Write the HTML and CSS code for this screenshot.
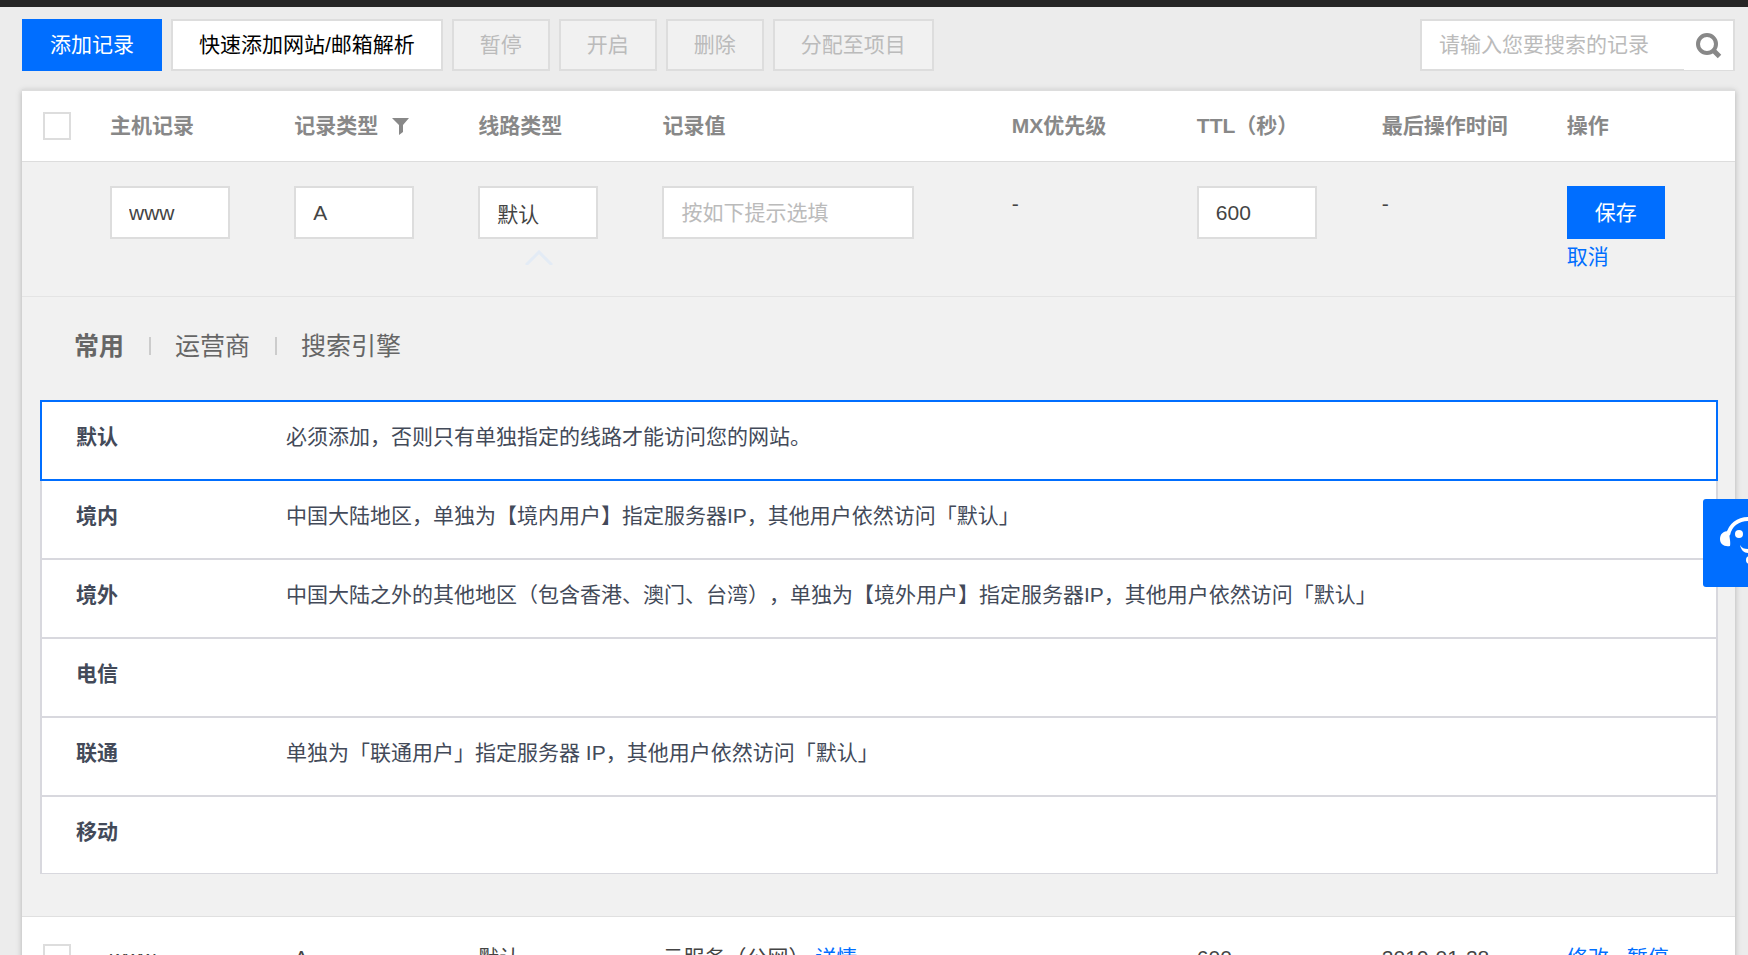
FILE: index.html
```html
<!DOCTYPE html>
<html lang="zh-CN">
<head>
<meta charset="utf-8">
<meta name="viewport" content="width=device-width, initial-scale=1">
<title>记录管理</title>
<link rel="stylesheet" href="styles.css">
</head>
<body>
<div class="topbar"></div>
<main class="page">
  <div class="toolbar">
    <button class="btn btn-primary" type="button">添加记录</button>
    <button class="btn" type="button">快速添加网站/邮箱解析</button>
    <button class="btn" type="button" disabled>暂停</button>
    <button class="btn" type="button" disabled>开启</button>
    <button class="btn" type="button" disabled>删除</button>
    <button class="btn" type="button" disabled>分配至项目</button>
    <form class="search">
      <input class="search-input" type="text" aria-label="搜索记录" placeholder="请输入您要搜索的记录">
      <button class="search-btn" type="button" aria-label="搜索">
        <svg width="26" height="26" viewBox="0 0 26 26" fill="none" stroke="#888" aria-hidden="true"><circle cx="11" cy="11" r="9" stroke-width="4"/><path d="M17 17l6.500 6.500" stroke-width="5"/></svg>
      </button>
    </form>
  </div>

  <table class="records">
    <colgroup>
      <col class="col-check"><col class="col-std"><col class="col-std"><col class="col-std"><col class="col-value"><col class="col-meta"><col class="col-meta"><col class="col-meta"><col>
    </colgroup>
    <thead>
      <tr>
        <th class="check-cell"><input class="check" type="checkbox" aria-label="全选"></th>
        <th>主机记录</th>
        <th><span class="filter">记录类型<svg width="17" height="17" viewBox="0 0 17 17" fill="#888" aria-hidden="true"><path d="M0 0h17l-6 7v7l-4 3V7z"/></svg></span></th>
        <th>线路类型</th>
        <th>记录值</th>
        <th>MX优先级</th>
        <th>TTL（秒）</th>
        <th>最后操作时间</th>
        <th>操作</th>
      </tr>
    </thead>
    <tbody>
      <tr class="edit-row">
        <td></td>
        <td><input class="field" type="text" aria-label="主机记录" value="www"></td>
        <td><input class="field" type="text" aria-label="记录类型" value="A"></td>
        <td class="line-cell"><input class="field" type="text" aria-label="线路类型" value="默认"><svg class="caret" width="28" height="15" viewBox="0 0 28 15" fill="none" stroke="#e3ebf5" stroke-width="3" aria-hidden="true"><path d="M1 15L14 2l13 13"/></svg></td>
        <td><input class="field field-wide" type="text" aria-label="记录值" placeholder="按如下提示选填"></td>
        <td>-</td>
        <td><input class="field" type="text" aria-label="TTL（秒）" value="600"></td>
        <td>-</td>
        <td><button class="btn btn-primary btn-save" type="button">保存</button><a class="link cancel" href="#">取消</a></td>
      </tr>
      <tr class="panel-row">
        <td colspan="9">
          <nav class="tabs">
            <button class="tab tab-active" type="button">常用</button>
            <button class="tab" type="button">运营商</button>
            <button class="tab" type="button">搜索引擎</button>
          </nav>
          <ul class="lines">
            <li class="line line-active"><strong class="line-name">默认</strong><span>必须添加，否则只有单独指定的线路才能访问您的网站。</span></li>
            <li class="line"><strong class="line-name">境内</strong><span>中国大陆地区，单独为【境内用户】指定服务器IP，其他用户依然访问「默认」</span></li>
            <li class="line"><strong class="line-name">境外</strong><span>中国大陆之外的其他地区（包含香港、澳门、台湾），单独为【境外用户】指定服务器IP，其他用户依然访问「默认」</span></li>
            <li class="line"><strong class="line-name">电信</strong></li>
            <li class="line"><strong class="line-name">联通</strong><span>单独为「联通用户」指定服务器 IP，其他用户依然访问「默认」</span></li>
            <li class="line"><strong class="line-name">移动</strong></li>
          </ul>
        </td>
      </tr>
      <tr class="data-row">
        <td class="check-cell"><input class="check" type="checkbox" aria-label="选择 www"></td>
        <td>www</td>
        <td>A</td>
        <td>默认</td>
        <td>云服务（公网） <a class="link" href="#">详情</a></td>
        <td></td>
        <td>600</td>
        <td>2019-01-28</td>
        <td><span class="actions"><a class="link" href="#">修改</a><a class="link" href="#">暂停</a></span></td>
      </tr>
    </tbody>
  </table>
</main>
<button class="support" type="button" aria-label="在线客服">
  <svg width="88" height="88" viewBox="0 0 88 88" fill="none" stroke="#fff" aria-hidden="true">
    <path d="M25 36C27 26 35 20 45 20s18 6 20 16" stroke-width="4"/>
    <path d="M26 32c-6 0-9 3-9 8s4 8 10 7c1-4-1-10-1-15zM64 32c6 0 9 3 9 8s-4 8-10 7c-1-4 1-10 1-15z" fill="#fff" stroke="none"/>
    <circle cx="36" cy="35" r="4" fill="#fff" stroke="none"/><circle cx="54" cy="35" r="4" fill="#fff" stroke="none"/>
    <path d="M37 46c2 3 4 4 8 4s6-1 8-4c-1 5-4 8-8 8s-7-3-8-8z" fill="#fff" stroke="none"/>
    <circle cx="47" cy="61" r="4" fill="#fff" stroke="none"/><path d="M48 61c9 0 14-6 17-15" stroke-width="3"/>
  </svg>
</button>
</body>
</html>
```
FILE: styles.css
```css
* {
  box-sizing: border-box;
}

html {
  scrollbar-width: none;
}

body {
  margin: 0;
  background: #ececec;
  color: #444;
  font: 21px/36px "Liberation Sans", "Noto Sans CJK SC", sans-serif;
  text-spacing-trim: space-all;
}

button,
input {
  font: inherit;
}

.topbar {
  height: 7px;
  background: #262626;
}

.page {
  padding: 12px 13px 0 22px;
}

.toolbar {
  display: flex;
  gap: 9px;
  margin-bottom: 18px;
}

.btn {
  height: 52px;
  padding: 0 26px;
  border: 2px solid #ddd;
  background: #fff;
  color: #000;
  line-height: 48px;
  white-space: nowrap;
}

.btn:disabled {
  background: #f1f1f1;
  color: #bbb;
}

.btn-primary {
  border-color: #006eff;
  background: #006eff;
  color: #fff;
}

.search {
  display: flex;
  width: 315px;
  height: 52px;
  margin-left: auto;
  border: 2px solid #ddd;
  background: #fff;
}

.search-input {
  flex: 1;
  min-width: 0;
  padding: 0 17px;
  border: 0;
  background: none;
  color: #444;
}

.search-input::placeholder,
.field::placeholder {
  color: #bbb;
  opacity: 1;
}

.search-btn {
  display: flex;
  align-items: center;
  justify-content: center;
  width: 49px;
  margin-bottom: -1px;
  padding: 0;
  border: 0;
  background: #fff;
}

.records {
  width: 100%;
  border-top: 2px solid #ddd;
  border-spacing: 0;
  table-layout: fixed;
  background: #fff;
  box-shadow: 0 2px 6px rgba(0, 0, 0, 0.25);
}

.col-check {
  width: 88px;
}

.col-std {
  width: 10.75%;
}

.col-value {
  width: 20.4%;
}

.col-meta {
  width: 10.8%;
}

th,
td {
  padding: 0;
  text-align: left;
  vertical-align: top;
  white-space: nowrap;
}

th {
  height: 71px;
  border-bottom: 1px solid #ddd;
  color: #888;
  vertical-align: middle;
}

.check-cell {
  padding-left: 21px;
}

.check {
  display: block;
  width: 28px;
  height: 28px;
  margin: 0;
  border: 2px solid #ddd;
  appearance: none;
  background: #fff;
}

.filter {
  display: flex;
  align-items: center;
  gap: 14px;
}

.edit-row td {
  padding: 24px 0 21px;
  border-bottom: 1px solid #e4e4e4;
  background: #f1f1f1;
}

.field {
  display: block;
  width: 65%;
  height: 53px;
  padding: 0 17px;
  border: 2px solid #ddd;
  background: #fff;
  color: #444;
}

.field-wide {
  width: 72%;
}

.line-cell {
  position: relative;
}

.caret {
  position: absolute;
  top: 88px;
  left: 47px;
}

.btn-save {
  display: block;
  height: 53px;
}

.link {
  color: #006eff;
  text-decoration: none;
}

.cancel {
  display: block;
}

.panel-row td {
  padding: 31px 17px 42px 18px;
  border-bottom: 1px solid #e0e0e0;
  background: #f1f1f1;
  white-space: normal;
}

.tabs {
  display: flex;
  align-items: center;
  margin: 0 34px 36px;
}

.tab {
  display: flex;
  align-items: center;
  padding: 0;
  border: 0;
  background: none;
  color: #666;
  font-size: 25px;
  line-height: 36px;
}

.tab + .tab::before {
  width: 2px;
  height: 18px;
  margin: 0 24px 0 25px;
  background: #ccc;
  content: "";
}

.tab-active {
  font-weight: bold;
}

.lines {
  margin: 0;
  padding: 0;
  list-style: none;
}

.line {
  display: flex;
  min-height: 79px;
  padding: 17px 34px 20px;
  border: 2px solid #d8d8de;
  border-top: 0;
  background: #fff;
  color: #434a59;
}

.line:last-child {
  min-height: 77px;
  border-bottom-width: 1px;
}

.line-active {
  min-height: 81px;
  border: 2px solid #006eff;
}

.line-name {
  flex: none;
  width: 210px;
}

.data-row td {
  height: 82px;
  vertical-align: middle;
}

.actions {
  display: flex;
  gap: 18px;
}

.support {
  position: fixed;
  top: 499px;
  right: -43px;
  width: 88px;
  height: 88px;
  padding: 0;
  border: 0;
  border-radius: 3px;
  background: #006eff;
}
```
